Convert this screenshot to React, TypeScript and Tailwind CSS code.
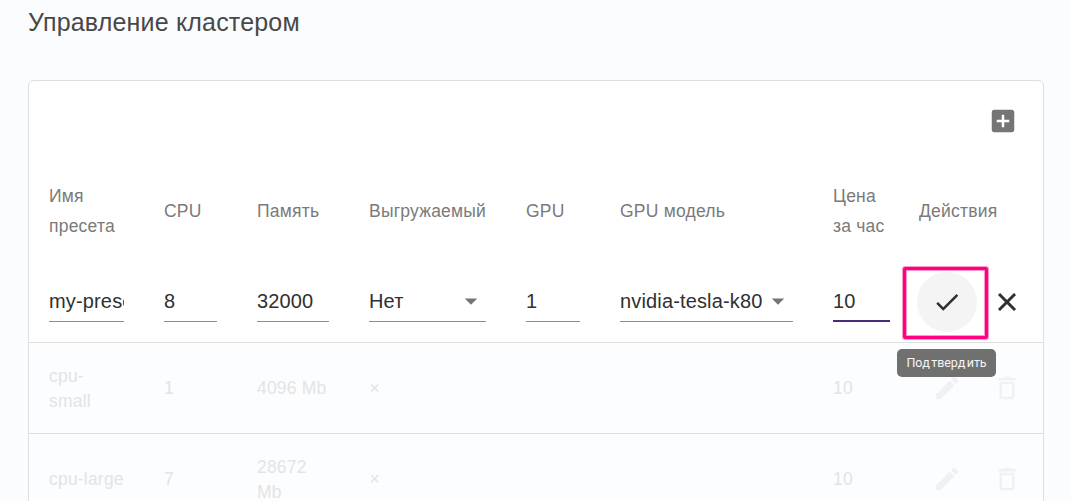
import type { ReactNode } from 'react';

const COLS =
  'grid grid-cols-[115px_93px_112px_157px_94px_213px_85px_1fr] items-center pl-5';

const PATHS = {
  add: 'M19 3H5c-1.11 0-2 .9-2 2v14c0 1.1.89 2 2 2h14c1.1 0 2-.9 2-2V5c0-1.1-.9-2-2-2zm-2 10h-4v4h-2v-4H7v-2h4V7h2v4h4v2z',
  check: 'M9 16.17L4.83 12l-1.42 1.41L9 19 21 7l-1.41-1.41z',
  clear:
    'M19 6.41L17.59 5 12 10.59 6.41 5 5 6.41 10.59 12 5 17.59 6.41 19 12 13.41 17.59 19 19 17.59 13.41 12z',
  edit: 'M3 17.25V21h3.75L17.81 9.94l-3.75-3.75L3 17.25zM20.71 7.04c.39-.39.39-1.02 0-1.41l-2.34-2.34c-.39-.39-1.02-.39-1.41 0l-1.83 1.83 3.75 3.75 1.83-1.83z',
  trash:
    'M6 19c0 1.1.9 2 2 2h8c1.1 0 2-.9 2-2V7H6v12zM8 9h8v10H8V9zm7.5-5l-1-1h-5l-1 1H5v2h14V4z',
  arrow: 'M7 10l5 5 5-5z',
};

function Icon({ name, bold }: { name: keyof typeof PATHS; bold?: boolean }) {
  return (
    <svg
      viewBox="0 0 24 24"
      className={`size-[30px] shrink-0 fill-current ${bold ? 'stroke-current stroke-[0.4]' : ''}`}
    >
      <path d={PATHS[name]} />
    </svg>
  );
}

function Field({
  children,
  width,
  active,
  select,
}: {
  children: ReactNode;
  width: string;
  active?: boolean;
  select?: boolean;
}) {
  return (
    <div
      className={`flex h-[41px] items-center justify-between overflow-hidden whitespace-nowrap text-[20px] tracking-[0.15px] text-[#303030] ${width} ${
        active ? 'border-b-2 border-[#4a2c7a]' : 'border-b border-[#8c8c8c] pb-px'
      }`}
    >
      <span>{children}</span>
      {select && (
        <span className="-ml-1 flex text-[#757575]">
          <Icon name="arrow" />
        </span>
      )}
    </div>
  );
}

function PresetRow({ name, cpu, memory }: { name: ReactNode; cpu: string; memory: ReactNode }) {
  return (
    <div
      className={`${COLS} h-[91px] border-b border-[#dddee0] bg-[#fcfdff] text-[17.5px] leading-[25px] tracking-[0.2px] text-[#e3e4e4]`}
    >
      <div>{name}</div>
      <div>{cpu}</div>
      <div>{memory}</div>
      <div className="pl-[0.5px]">×</div>
      <div />
      <div />
      <div>10</div>
      <div className="flex gap-[30px] pl-[14px] text-[#f0f1f2]">
        <Icon name="edit" />
        <Icon name="trash" />
      </div>
    </div>
  );
}

export default function App() {
  return (
    <div className="h-[501px] overflow-hidden bg-[#fbfcfe] px-7 font-['Liberation_Sans',sans-serif]">
      <h1 className="h-20 pt-1.5 text-[25px] leading-8 tracking-[0.18px] text-[#484848]">
        Управление кластером
      </h1>
      <div className="h-[480px] w-[1016px] overflow-hidden rounded-md border border-[#dfdfdf] bg-white">
        <div className="flex h-20 items-center justify-end pr-[25px] text-[#757575]">
          <Icon name="add" />
        </div>
        <div
          className={`${COLS} h-[100px] text-[17.5px] leading-[30px] tracking-[0.22px] text-[#7a7a7a]`}
        >
          <div>
            Имя
            <br />
            пресета
          </div>
          <div>CPU</div>
          <div>Память</div>
          <div>Выгружаемый</div>
          <div>GPU</div>
          <div>GPU модель</div>
          <div>
            Цена
            <br />
            за час
          </div>
          <div className="pl-px">Действия</div>
        </div>
        <div className={`${COLS} h-[82px] border-b border-[#dfdfdf]`}>
          <Field width="w-[75px]">my-preset</Field>
          <Field width="w-[53px]">8</Field>
          <Field width="w-[72px]">32000</Field>
          <Field width="w-[117px]" select>
            Нет
          </Field>
          <Field width="w-[54px]">1</Field>
          <Field width="w-[173px]" select>
            nvidia-tesla-k80
          </Field>
          <Field width="w-[57px]" active>
            10
          </Field>
          <div className="relative flex items-center gap-[15px] text-[#2e2e2e]">
            <div className="-ml-px flex size-[60px] items-center justify-center rounded-full bg-[#f4f4f4]">
              <Icon name="check" />
            </div>
            <Icon name="clear" bold />
            <div className="absolute -left-[15px] -top-[5px] h-[72px] w-[85px] rounded-[2px] border-[3px] border-[#ff0080] shadow-[0_0_0_1px_#ff008066,inset_0_0_0_1px_#ff008066]" />
            <div className="absolute -left-[21px] top-[77px] flex h-7 w-[99px] items-center justify-center rounded-[5px] bg-[#707070] font-['Roboto',sans-serif] text-[12.5px] text-[#f6f6f6]">
              <span className="pt-px tracking-[-0.1px]">
                По<span className="tracking-[1.5px]">д</span>твер
                <span className="tracking-[1.5px]">д</span>ить
              </span>
            </div>
          </div>
        </div>
        <PresetRow
          name={
            <div className="pt-px">
              cpu-
              <br />
              small
            </div>
          }
          cpu="1"
          memory="4096 Mb"
        />
        <PresetRow
          name="cpu-large"
          cpu="7"
          memory={
            <div className="pt-px">
              28672
              <br />
              Mb
            </div>
          }
        />
      </div>
    </div>
  );
}
